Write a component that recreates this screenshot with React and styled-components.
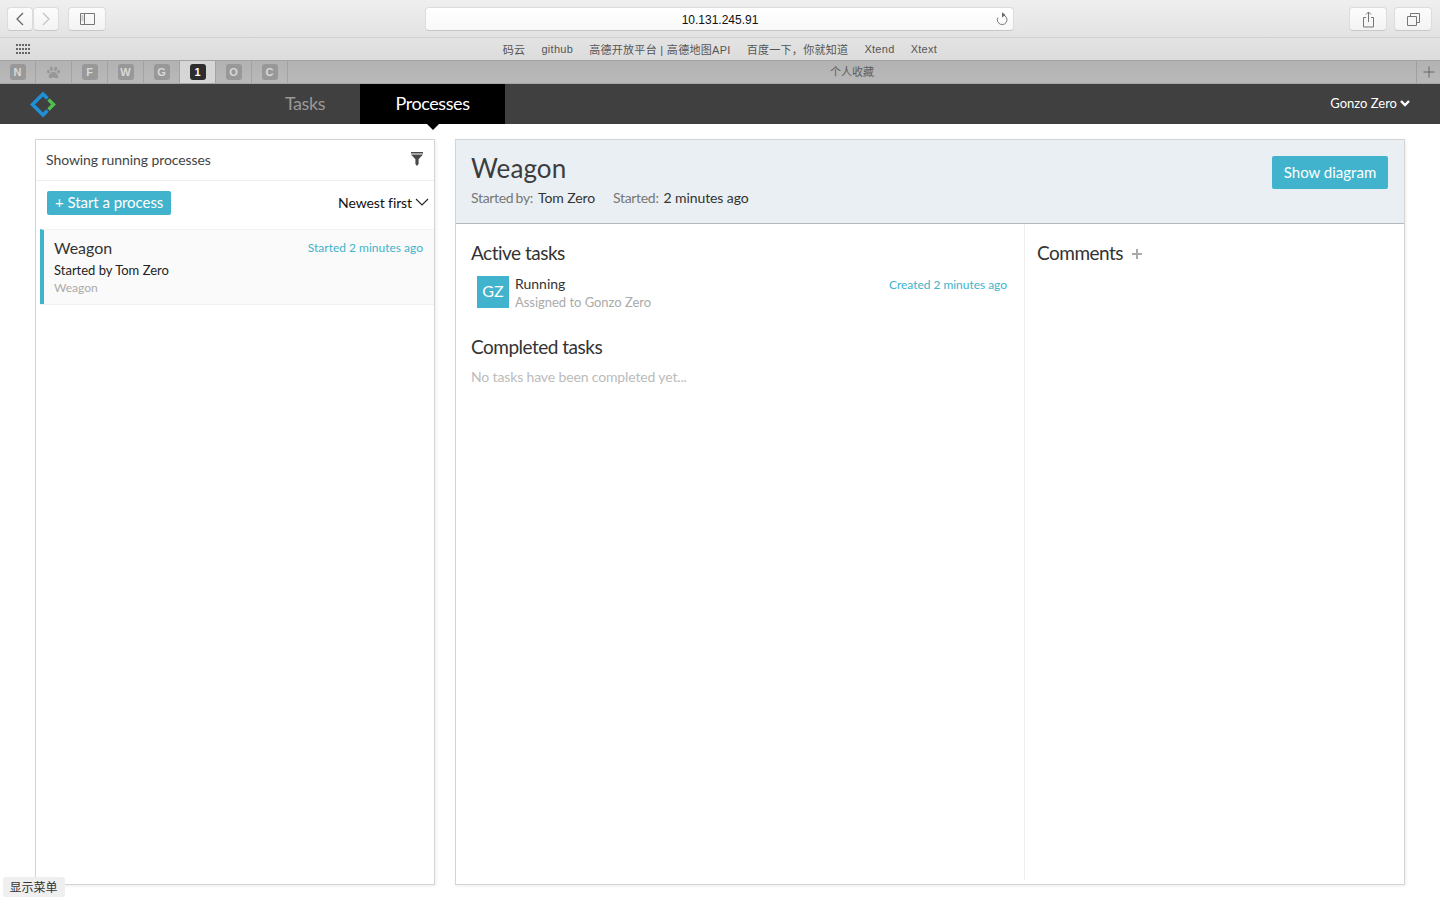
import React from "react";
import styled, { createGlobalStyle } from "styled-components";
import { FaPaw } from "react-icons/fa";

const GlobalStyle = createGlobalStyle`
  html, body {
    margin: 0;
    padding: 0;
    height: 900px;
    overflow: hidden;
    background: #fff;
    font-family: Lato, "Noto Sans CJK SC", sans-serif;
  }
  * { box-sizing: border-box; }
`;

const Page = styled.div`
  position: relative;
  width: 1440px;
  height: 900px;
  display: flex;
  flex-direction: column;
  overflow: hidden;
`;

/* browser chrome */
const Toolbar = styled.div`
  height: 38px;
  flex: none;
  display: flex;
  align-items: flex-start;
  padding: 7px 0 0 7px;
  background: linear-gradient(#efefef, #e3e3e3);
  border-bottom: 1px solid #d0d0d0;
`;

const ChromeButton = styled.div`
  width: ${({ $w }) => $w}px;
  height: 24px;
  margin-left: ${({ $ml }) => $ml || 0}px;
  flex: none;
  display: flex;
  align-items: center;
  justify-content: center;
  background: linear-gradient(#fcfcfc, #f3f3f3);
  border: 1px solid #dcdcdc;
  border-bottom-color: #c9c9c9;
  border-radius: 4px;
`;

const AddressBar = styled.div`
  position: relative;
  width: 589px;
  height: 24px;
  margin-left: 319px;
  flex: none;
  display: flex;
  align-items: center;
  justify-content: center;
  padding: 1px 0 0 1px;
  background: linear-gradient(#fff, #f8f8f8);
  border: 1px solid #dcdcdc;
  border-bottom-color: #c6c6c6;
  border-radius: 4px;
  font: 12px "Liberation Sans", sans-serif;
  color: #111;
`;

const ReloadIcon = styled.svg`
  position: absolute;
  right: 4px;
  top: 4px;
`;

const Bookmarks = styled.div`
  position: relative;
  height: 22px;
  flex: none;
  display: flex;
  align-items: center;
  justify-content: center;
  gap: 16px;
  background: linear-gradient(#e3e3e3, #dcdcdc);
  font: 11px "Liberation Sans", "Noto Sans CJK SC", sans-serif;
  letter-spacing: 0.3px;
  color: #555;
`;

const AppsGrid = styled.svg`
  position: absolute;
  left: 16px;
  top: 5px;
`;

const TabStrip = styled.div`
  height: 24px;
  flex: none;
  display: flex;
  background: linear-gradient(#b2b2b2, #b9b9b9);
  border-top: 1px solid #a3a3a3;
  border-bottom: 1px solid #a8a8a8;
`;

const PinnedTab = styled.div`
  width: 36px;
  flex: none;
  display: flex;
  align-items: center;
  justify-content: center;
  border-right: 1px solid #a3a3a3;
  background: ${({ $active }) => ($active ? "#d6d6d6" : "transparent")};
`;

const PinBadge = styled.span`
  width: 16px;
  height: 16px;
  display: flex;
  align-items: center;
  justify-content: center;
  border-radius: 3px;
  background: ${({ $active }) => ($active ? "#2d2d2d" : "#989898")};
  color: ${({ $active }) => ($active ? "#fff" : "#d8d8d8")};
  font: bold 11px "Liberation Sans", sans-serif;
`;

const PawSlot = styled.span`
  display: flex;
  color: #979797;
  font-size: 13px;
`;

const TabTitle = styled.div`
  flex: 1;
  display: flex;
  align-items: center;
  justify-content: center;
  padding-bottom: 2px;
  font: 11px "Liberation Sans", "Noto Sans CJK SC", sans-serif;
  color: #5e5e5e;
`;

const NewTab = styled.div`
  width: 24px;
  flex: none;
  display: flex;
  align-items: center;
  justify-content: center;
  border-left: 1px solid #a0a0a0;
`;

/* app nav */
const NavBar = styled.nav`
  height: 40px;
  flex: none;
  display: flex;
  background: #404040;
  color: #fff;
`;

const Logo = styled.svg`
  margin: 7px 0 0 29px;
  flex: none;
`;

const NavTab = styled.a`
  position: relative;
  display: flex;
  align-items: center;
  justify-content: center;
  width: ${({ $w }) => $w}px;
  margin-left: ${({ $ml }) => $ml || 0}px;
  padding-bottom: 3px;
  font-size: 18px;
  letter-spacing: -0.42px;
  color: ${({ $active }) => ($active ? "#fff" : "#999")};
  background: ${({ $active }) => ($active ? "#000" : "transparent")};

  ${({ $active }) =>
    $active &&
    `&::after {
      content: "";
      position: absolute;
      left: 50%;
      bottom: -6px;
      margin-left: -6px;
      border-left: 6px solid transparent;
      border-right: 6px solid transparent;
      border-top: 6px solid #000;
    }`}
`;

const UserMenu = styled.div`
  margin-left: auto;
  padding: 0 30px 3px 0;
  display: flex;
  align-items: center;
  gap: 3px;
  font-size: 13px;
`;

/* content */
const Content = styled.main`
  flex: none;
  height: 761px;
  display: flex;
  gap: 20px;
  padding: 15px 35px 0;
`;

const Card = styled.section`
  width: ${({ $w }) => $w}px;
  height: 746px;
  flex: none;
  display: flex;
  flex-direction: column;
  background: #fff;
  border: 1px solid #d4d4d4;
  box-shadow: 1px 1px 3px rgba(0, 0, 0, 0.08);
`;

const FilterRow = styled.div`
  height: 41px;
  flex: none;
  display: flex;
  align-items: center;
  justify-content: space-between;
  padding: 0 11px 2px 10px;
  border-bottom: 1px solid #eee;
  font-size: 14px;
  letter-spacing: -0.08px;
  color: #444;
`;

const FilterIcon = styled.svg`
  margin-top: -1px;
`;

const ActionRow = styled.div`
  height: 48px;
  flex: none;
  display: flex;
  align-items: center;
  justify-content: space-between;
  padding: 0 5px 4px 11px;
`;

const SmallButton = styled.button`
  height: 24px;
  padding: 0 8px 2px;
  border: none;
  border-radius: 2px;
  background: #41b3cc;
  color: #fff;
  font: 15px Lato, sans-serif;
  letter-spacing: -0.05px;
`;

const SortMenu = styled.div`
  display: flex;
  align-items: center;
  gap: 3px;
  margin-top: -2px;
  font-size: 14px;
  letter-spacing: -0.1px;
  color: #111;
`;

const ProcessItem = styled.div`
  display: grid;
  grid-template-columns: 1fr auto;
  align-content: start;
  height: 75px;
  margin-left: 4px;
  padding: 8px 11px 0 10px;
  background: #fafafa;
  border-left: 4px solid #41b3cc;
  border-top: 1px solid #f3f3f3;
  box-shadow: 0 1px 0 #f0f0f0;
`;

const ItemTitle = styled.div`
  font-size: 16px;
  line-height: 20px;
  color: #333;
`;

const TimeStamp = styled.div`
  font-size: 12px;
  line-height: ${({ $lh }) => $lh || 18}px;
  letter-spacing: ${({ $tight }) => ($tight ? "-0.03px" : "0")};
  color: #41b3cc;
`;

const ItemLine = styled.div`
  grid-column: 1 / -1;
  margin-top: ${({ $muted }) => ($muted ? 0 : 1)}px;
  font-size: ${({ $muted }) => ($muted ? 12 : 13)}px;
  line-height: ${({ $muted }) => ($muted ? 14 : 22)}px;
  color: ${({ $muted }) => ($muted ? "#aaa" : "#222")};
`;

const DetailHeader = styled.header`
  height: 84px;
  flex: none;
  display: flex;
  justify-content: space-between;
  padding: 9px 16px 0 15px;
  background: #e9eff2;
  border-bottom: 1px solid #b4b8bf;
`;

const DetailTitle = styled.h1`
  margin: 0;
  font-size: 26px;
  line-height: 38px;
  font-weight: 400;
  letter-spacing: 0.1px;
  color: #3c3c3c;
`;

const MetaRow = styled.div`
  display: flex;
  margin-top: 1px;
  font-size: 14px;
  line-height: 20px;
  letter-spacing: -0.1px;
`;

const MetaLabel = styled.span`
  color: #777;
  margin-left: ${({ $ml }) => $ml || 0}px;
  margin-right: 5px;
  letter-spacing: -0.32px;
  word-spacing: -1px;
`;

const MetaValue = styled.span`
  color: #333;
`;

const PrimaryButton = styled.button`
  width: 116px;
  height: 33px;
  margin-top: 7px;
  padding: 0 0 2px;
  border: none;
  border-radius: 2px;
  background: #41b3cc;
  color: #fff;
  font: 15px Lato, sans-serif;
  letter-spacing: 0;
`;

const DetailBody = styled.div`
  flex: 1;
  min-height: 0;
  display: flex;
`;

const TasksColumn = styled.div`
  width: 569px;
  flex: none;
  margin-bottom: 4px;
  padding: 16px 17px 0 15px;
  border-right: 1px solid #eee;
`;

const CommentsColumn = styled.div`
  flex: 1;
  padding: 16px 12px 0;
`;

const SectionTitle = styled.h2`
  display: flex;
  align-items: center;
  gap: 9px;
  margin: ${({ $mt }) => $mt || 0}px 0 0;
  font-size: 19px;
  line-height: 26px;
  font-weight: 400;
  letter-spacing: -0.5px;
  color: #333;
`;

const AddIcon = styled.svg`
  margin-top: 1px;
`;

const TaskRow = styled.div`
  display: flex;
  margin-top: 10px;
  padding-left: 6px;
`;

const Avatar = styled.div`
  width: 32px;
  height: 32px;
  flex: none;
  display: flex;
  align-items: center;
  justify-content: center;
  margin-right: 6px;
  padding-bottom: 3px;
  background: #41b3cc;
  color: #fff;
  font-size: 16px;
`;

const TaskText = styled.div`
  flex: 1;
  margin-top: -1px;
`;

const TaskName = styled.div`
  font-size: 14px;
  line-height: 18px;
  color: #333;
`;

const TaskAssignee = styled.div`
  font-size: 13px;
  line-height: 18px;
  letter-spacing: -0.03px;
  color: #aaa;
`;

const EmptyNote = styled.div`
  margin-top: 7px;
  font-size: 14px;
  line-height: 20px;
  letter-spacing: -0.14px;
  color: #bbb;
`;

const StatusTip = styled.div`
  position: absolute;
  left: 3px;
  top: 877px;
  width: 62px;
  height: 20px;
  display: flex;
  align-items: center;
  justify-content: center;
  padding: 0 1px 1px 0;
  border-radius: 3px;
  background: #efefef;
  font: 12px "Noto Sans CJK SC", sans-serif;
  color: #333;
`;

const bookmarks = ["码云", "github", "高德开放平台 | 高德地图API", "百度一下，你就知道", "Xtend", "Xtext"];
const pinned = ["N", "paw", "F", "W", "G", "1", "O", "C"];

function App() {
  return (
    <Page>
      <GlobalStyle />
      <Toolbar>
        <ChromeButton $w={26}>
          <svg width="10" height="14" viewBox="0 0 10 14" fill="none" stroke="#666" strokeWidth="1.3">
            <path d="M8 1 2 7l6 6" />
          </svg>
        </ChromeButton>
        <ChromeButton $w={26}>
          <svg width="10" height="14" viewBox="0 0 10 14" fill="none" stroke="#c4c4c4" strokeWidth="1.3">
            <path d="m2 1 6 6-6 6" />
          </svg>
        </ChromeButton>
        <ChromeButton $w={38} $ml={9}>
          <svg width="15" height="12" viewBox="0 0 15 12" fill="none" stroke="#777">
            <path d="M.5.5h14v11H.5zM4.5.5v11" />
            <path d="M1.5 3h2M1.5 5h2M1.5 7h2" stroke="#999" />
          </svg>
        </ChromeButton>
        <AddressBar>
          10.131.245.91
          <ReloadIcon width="14" height="14" viewBox="0 0 14 14" fill="none" stroke="#777" strokeWidth="1">
            <path d="M7.5 3a4.8 4.8 0 1 1-4.6 2.6" />
            <path d="M7 .2 10.5 3 7 5.6z" fill="#666" stroke="none" />
          </ReloadIcon>
        </AddressBar>
        <ChromeButton $w={38} $ml={335}>
          <svg width="13" height="17" viewBox="0 0 13 17" fill="none" stroke="#777">
            <path d="M4 6.5H1.5v9.5h10V6.5H9M6.5 11V1M4 3.5 6.5 1 9 3.5" />
          </svg>
        </ChromeButton>
        <ChromeButton $w={38} $ml={7}>
          <svg width="13" height="13" viewBox="0 0 13 13" fill="none" stroke="#777">
            <path d="M.5 3.5h9v9h-9zM3.5 3.5v-3h9v9h-3" />
          </svg>
        </ChromeButton>
      </Toolbar>

      <Bookmarks>
        <AppsGrid width="15" height="12" viewBox="0 0 15 12" fill="#666">
          {[0, 1, 2].flatMap((r) =>
            [0, 1, 2, 3, 4].map((c) => <rect key={`${r}-${c}`} x={c * 3} y={r * 4 + 1} width="2" height="2" />)
          )}
        </AppsGrid>
        {bookmarks.map((b) => (
          <span key={b}>{b}</span>
        ))}
      </Bookmarks>

      <TabStrip>
        {pinned.map((p) => (
          <PinnedTab key={p} $active={p === "1"}>
            {p === "paw" ? (
              <PawSlot>
                <FaPaw />
              </PawSlot>
            ) : (
              <PinBadge $active={p === "1"}>{p}</PinBadge>
            )}
          </PinnedTab>
        ))}
        <TabTitle>个人收藏</TabTitle>
        <NewTab>
          <svg width="12" height="12" viewBox="0 0 12 12" stroke="#666">
            <path d="M6 .5v11M.5 6h11" />
          </svg>
        </NewTab>
      </TabStrip>

      <NavBar>
        <Logo width="28" height="28" viewBox="0 0 28 28" fill="none">
          <path d="M18.5 7.5 14 3 3.5 13.5 14 24l4.5-4.5" stroke="#1f8fd6" strokeWidth="3.6" />
          <path d="m19.5 8.5 5 5-5 5" stroke="#4fc04f" strokeWidth="3.4" />
        </Logo>
        <NavTab $w={110} $ml={193}>Tasks</NavTab>
        <NavTab $w={145} $active>Processes</NavTab>
        <UserMenu>
          Gonzo Zero
          <svg width="10" height="8" viewBox="0 0 10 8" fill="none" stroke="#fff" strokeWidth="2.4">
            <path d="m1 2 4 4 4-4" />
          </svg>
        </UserMenu>
      </NavBar>

      <Content>
        <Card $w={400}>
          <FilterRow>
            Showing running processes
            <FilterIcon width="12" height="14" viewBox="0 0 12 14">
              <path d="M0 0h12v1.5H0zM0 2.4h12L7.6 7.2V12L6 14l-1.6-2V7.2z" fill="#4a4a4a" />
            </FilterIcon>
          </FilterRow>
          <ActionRow>
            <SmallButton>+ Start a process</SmallButton>
            <SortMenu>
              Newest first
              <svg width="14" height="8" viewBox="0 0 14 8" fill="none" stroke="#222" strokeWidth="1.1">
                <path d="m1 1 6 6 6-6" />
              </svg>
            </SortMenu>
          </ActionRow>
          <ProcessItem>
            <ItemTitle>Weagon</ItemTitle>
            <TimeStamp $lh={20}>Started 2 minutes ago</TimeStamp>
            <ItemLine>Started by Tom Zero</ItemLine>
            <ItemLine $muted>Weagon</ItemLine>
          </ProcessItem>
        </Card>

        <Card $w={950}>
          <DetailHeader>
            <div>
              <DetailTitle>Weagon</DetailTitle>
              <MetaRow>
                <MetaLabel>Started by:</MetaLabel>
                <MetaValue>Tom Zero</MetaValue>
                <MetaLabel $ml={18}>Started:</MetaLabel>
                <MetaValue>2 minutes ago</MetaValue>
              </MetaRow>
            </div>
            <PrimaryButton>Show diagram</PrimaryButton>
          </DetailHeader>
          <DetailBody>
            <TasksColumn>
              <SectionTitle>Active tasks</SectionTitle>
              <TaskRow>
                <Avatar>GZ</Avatar>
                <TaskText>
                  <TaskName>Running</TaskName>
                  <TaskAssignee>Assigned to Gonzo Zero</TaskAssignee>
                </TaskText>
                <TimeStamp $tight>Created 2 minutes ago</TimeStamp>
              </TaskRow>
              <SectionTitle $mt={23}>Completed tasks</SectionTitle>
              <EmptyNote>No tasks have been completed yet...</EmptyNote>
            </TasksColumn>
            <CommentsColumn>
              <SectionTitle>
                Comments
                <AddIcon width="10" height="10" viewBox="0 0 10 10" stroke="#aaa" strokeWidth="2">
                  <path d="M5 0v10M0 5h10" />
                </AddIcon>
              </SectionTitle>
            </CommentsColumn>
          </DetailBody>
        </Card>
      </Content>

      <StatusTip>显示菜单</StatusTip>
    </Page>
  );
}

export default App;
